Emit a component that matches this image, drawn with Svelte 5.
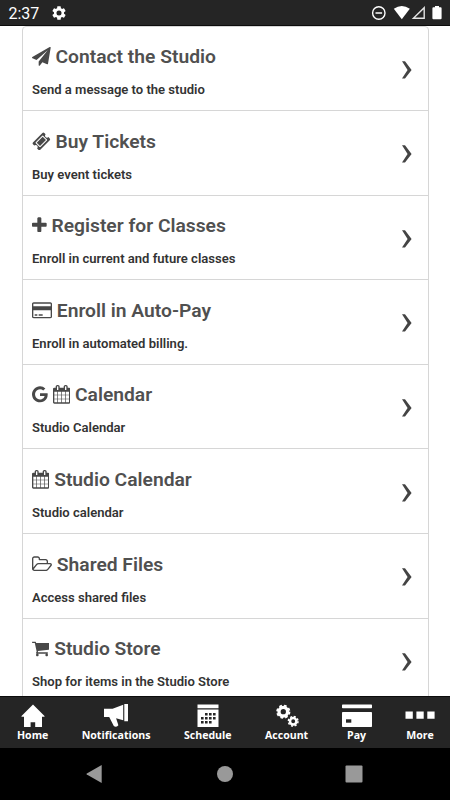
<script>
  // every icon keeps its own advance width, so titles sit right after it
  const icons = {
    plane: {
      box: '0 0 1792 1792',
      path: 'M1764 11q33 24 27 64l-256 1536q-5 29-32 45-14 8-31 8-11 0-24-5l-453-185-242 295q-18 23-49 23-13 0-22-4-19-7-30.5-23.5t-11.5-36.5v-349l864-1059-1069 925-395-162q-37-14-40-55-2-40 32-59l1664-960q15-9 32-9 20 0 36 11z',
    },
    ticket: {
      box: '0 0 1792 1792',
      path: 'M1024 452l316 316-572 572-316-316zm-211 979l618-618q19-19 19-45t-19-45l-362-362q-18-18-45-18t-45 18l-618 618q-19 19-19 45t19 45l362 362q18 18 45 18t45-18zm889-637l-907 908q-37 37-90.5 37t-90.5-37l-126-126q56-56 56-136t-56-136-136-56-136 56l-125-126q-37-37-37-90.5t37-90.5l907-906q37-37 90.5-37t90.5 37l125 125q-56 56-56 136t56 136 136 56 136-56l126 125q37 37 37 90.5t-37 90.5z',
    },
    plus: {
      box: '192 0 1408 1792',
      path: 'M1600 736v192q0 40-28 68t-68 28h-416v416q0 40-28 68t-68 28h-192q-40 0-68-28t-28-68v-416h-416q-40 0-68-28t-28-68v-192q0-40 28-68t68-28h416v-416q0-40 28-68t68-28h192q40 0 68 28t28 68v416h416q40 0 68 28t28 68z',
    },
    card: {
      box: '0 0 1920 1792',
      path: 'M1760 128q66 0 113 47t47 113v1216q0 66-47 113t-113 47h-1600q-66 0-113-47t-47-113v-1216q0-66 47-113t113-47h1600zm-1600 128q-13 0-22.5 9.5t-9.5 22.5v224h1664v-224q0-13-9.5-22.5t-22.5-9.5h-1600zm1600 1280q13 0 22.5-9.5t9.5-22.5v-608h-1664v608q0 13 9.5 22.5t22.5 9.5h1600zm-1504-128v-128h256v128h-256zm384 0v-128h384v128h-384z',
    },
    google: {
      box: '128 0 1536 1792',
      path: 'M896 786h725q12 67 12 128 0 217-91 387.5t-259.5 266.5-386.5 96q-157 0-299-60.5t-245-163.5-163.5-245-60.5-299 60.5-299 163.5-245 245-163.5 299-60.5q300 0 515 201l-209 201q-123-119-306-119-129 0-238.5 65t-173.5 176.5-64 243.5 64 243.5 173.5 176.5 238.5 65q87 0 160-24t120-60 82-82 51.5-87 22.5-78h-436v-264z',
    },
    calendar: {
      box: '64 0 1664 1792',
      path: 'M192 1664h288v-288h-288v288zm352 0h320v-288h-320v288zm-352-352h288v-320h-288v320zm352 0h320v-320h-320v320zm-352-384h288v-288h-288v288zm736 736h320v-288h-320v288zm-384-736h320v-288h-320v288zm768 736h288v-288h-288v288zm-384-352h320v-320h-320v320zm-352-864v-288q0-13-9.5-22.5t-22.5-9.5h-64q-13 0-22.5 9.5t-9.5 22.5v288q0 13 9.5 22.5t22.5 9.5h64q13 0 22.5-9.5t9.5-22.5zm736 864h288v-320h-288v320zm-384-384h320v-288h-320v288zm384 0h288v-288h-288v288zm32-480v-288q0-13-9.5-22.5t-22.5-9.5h-64q-13 0-22.5 9.5t-9.5 22.5v288q0 13 9.5 22.5t22.5 9.5h64q13 0 22.5-9.5t9.5-22.5zm384-64v1280q0 52-38 90t-90 38h-1408q-52 0-90-38t-38-90v-1280q0-52 38-90t90-38h128v-96q0-66 47-113t113-47h64q66 0 113 47t47 113v96h384v-96q0-66 47-113t113-47h64q66 0 113 47t47 113v96h128q52 0 90 38t38 90z',
    },
    folder: {
      box: '64 0 1920 1792',
      path: 'M1845 931q0-35-53-35h-1088q-40 0-85.5 21.5t-71.5 52.5l-294 363q-18 24-18 40 0 35 53 35h1088q40 0 86-22t71-53l294-363q18-22 18-39zm-1141-163h768v-160q0-40-28-68t-68-28h-576q-40 0-68-28t-28-68v-64q0-40-28-68t-68-28h-320q-40 0-68 28t-28 68v853l256-315q44-53 116-87.5t140-34.5zm1269 163q0 62-46 120l-295 363q-43 53-116 87.5t-140 34.5h-1088q-92 0-158-66t-66-158v-960q0-92 66-158t158-66h320q92 0 158 66t66 158v32h544q92 0 158 66t66 158v160h192q54 0 99 24.5t67 70.5q15 32 15 68z',
    },
    cart: {
      box: '64 0 1664 1792',
      path: 'M704 1536q0 52-38 90t-90 38-90-38-38-90 38-90 90-38 90 38 38 90zm896 0q0 52-38 90t-90 38-90-38-38-90 38-90 90-38 90 38 38 90zm128-1088v512q0 24-16.5 42.5t-40.5 21.5l-1044 122q13 60 13 70 0 16-24 64h920q26 0 45 19t19 45-19 45-45 19h-1024q-26 0-45-19t-19-45q0-11 8-31.5t16-36 21.5-40 15.5-29.5l-177-823h-204q-26 0-45-19t-19-45 19-45 45-19h256q16 0 28.5 6.5t19.5 15.5 13 24.5 8 26 5.5 29.5 4.5 26h1201q26 0 45 19t19 45z',
    },
  };

  const items = [
    { icons: ['plane'], title: 'Contact the Studio', text: 'Send a message to the studio' },
    { icons: ['ticket'], title: 'Buy Tickets', text: 'Buy event tickets' },
    { icons: ['plus'], title: 'Register for Classes', text: 'Enroll in current and future classes' },
    { icons: ['card'], title: 'Enroll in Auto-Pay', text: 'Enroll in automated billing.' },
    { icons: ['google', 'calendar'], title: 'Calendar', text: 'Studio Calendar' },
    { icons: ['calendar'], title: 'Studio Calendar', text: 'Studio calendar' },
    { icons: ['folder'], title: 'Shared Files', text: 'Access shared files' },
    { icons: ['cart'], title: 'Studio Store', text: 'Shop for items in the Studio Store' },
  ];

  const tabs = ['Home', 'Notifications', 'Schedule', 'Account', 'Pay', 'More'];
</script>

<div class="screen">
  <header class="status-bar">
    <span class="time">2:37</span>
    <svg class="settings" viewBox="2 2 20 20" width="14" height="14">
      <path fill="#fff" d="M19.14 12.94c.04-.3.06-.61.06-.94 0-.32-.02-.64-.07-.94l2.03-1.58a.49.49 0 0 0 .12-.61l-1.92-3.32a.488.488 0 0 0-.59-.22l-2.39.96c-.5-.38-1.03-.7-1.62-.94l-.36-2.54a.484.484 0 0 0-.48-.41h-3.84c-.24 0-.43.17-.47.41l-.36 2.54c-.59.24-1.13.57-1.62.94l-2.39-.96c-.22-.08-.47 0-.59.22L2.74 8.87c-.12.21-.08.47.12.61l2.03 1.58c-.05.3-.09.63-.09.94s.02.64.07.94l-2.03 1.58a.49.49 0 0 0-.12.61l1.92 3.32c.12.22.37.29.59.22l2.39-.96c.5.38 1.03.7 1.62.94l.36 2.54c.05.24.24.41.48.41h3.84c.24 0 .44-.17.47-.41l.36-2.54c.59-.24 1.13-.56 1.62-.94l2.39.96c.22.08.47 0 .59-.22l1.92-3.32c.12-.22.07-.47-.12-.61zM12 15.6A3.6 3.6 0 1 1 12 8.4a3.6 3.6 0 0 1 0 7.2z" />
    </svg>
    <svg class="indicators" viewBox="0 0 72 16" width="72" height="16">
      <circle cx="8.8" cy="8" r="6.2" fill="none" stroke="#fff" stroke-width="1.4" />
      <path d="M5.5 8h6.6" stroke="#fff" stroke-width="1.5" />
      <path d="M23.8 3.8Q31.8 -1.8 39.8 3.8L31.8 14.2z" fill="#fff" />
      <path d="M54.2 2.7v10.6H43.4z" fill="none" stroke="#e4e4e4" stroke-width="1.4" />
      <path d="M65 1h4v1.3h1.6q1 0 1 1v10q0 1-1 1h-7.2q-1 0-1-1v-10q0-1 1-1H65z" fill="#fff" />
    </svg>
  </header>

  <main>
    <ul class="menu">
      {#each items as item}
        <li>
          <div class="body">
            <h2>
              {#each item.icons as name}
                <svg class="icon" viewBox={icons[name].box}><path d={icons[name].path} /></svg>
              {/each}
              <span>{item.title}</span>
            </h2>
            <p>{item.text}</p>
          </div>
          <svg class="arrow" viewBox="0 0 10 18" width="10" height="18">
            <path d="M0 .3h3L9.6 9 3 17.5H0L5.6 9z" />
          </svg>
        </li>
      {/each}
    </ul>
  </main>

  <nav class="tabs">
    {#each tabs as tab}
      <a href="#{tab.toLowerCase()}">
        {#if tab === 'Home'}
          <svg width="24" height="24" viewBox="0 0 24 24">
            <path d="M12 .5L.5 12v.7H3V23h6.6v-4.7h4.6V23H21V12.7h2.5V12z" />
          </svg>
        {:else if tab === 'Notifications'}
          <svg width="26" height="24" viewBox="0 0 26 24">
            <path d="M1 4.8h8.6L20.2.7v15.6l-7.1-2 2.3 7q-2.4 2.6-4.6.8L6.2 13H1zM21.3 0H25v17.3h-3.7z" />
          </svg>
        {:else if tab === 'Schedule'}
          <svg width="22" height="24" viewBox="0 0 22 24">
            <path d="M.5.4h21v3.8H.5zM.5 5.4h21V23H.5z" />
            <path
              class="cut"
              d="M8 9h2.6v2.6H8zM12 9h2.6v2.6H12zM16 9h2.6v2.6H16zM4 13h2.6v2.6H4zM8 13h2.6v2.6H8zM12 13h2.6v2.6H12zM16 13h2.6v2.6H16zM4 17h2.6v2.6H4zM8 17h2.6v2.6H8zM12 17h2.6v2.6H12z"
            />
          </svg>
        {:else if tab === 'Account'}
          <svg class="gears" width="24" height="24" viewBox="0 0 24 24">
            <circle cx="8.3" cy="7.7" r="4.3" stroke-width="3.3" />
            <circle cx="8.3" cy="7.7" r="6.2" stroke-width="1.8" stroke-dasharray="2.7 2.17" />
            <circle cx="18.2" cy="17.3" r="3.2" stroke-width="2.5" />
            <circle cx="18.2" cy="17.3" r="4.8" stroke-width="1.5" stroke-dasharray="2.05 1.72" />
          </svg>
        {:else if tab === 'Pay'}
          <svg width="30" height="24" viewBox="0 0 30 24">
            <rect y=".5" width="30" height="3.8" rx=".7" />
            <rect y="8" width="30" height="15" rx=".7" />
            <path class="cut" d="M4 15.3h5.3v3.4H4z" />
          </svg>
        {:else}
          <svg width="30" height="24" viewBox="0 0 30 24">
            <path d="M.5 7.4h7.3v7.4H.5zM11.4 7.4h7.3v7.4h-7.3zM22.3 7.4h7.3v7.4h-7.3z" />
          </svg>
        {/if}
        <span>{tab}</span>
      </a>
    {/each}
  </nav>

  <footer class="system-nav">
    <svg width="18" height="20" viewBox="0 0 18 20"><path d="M15.7 1v18L.8 10.6q-.8-.6 0-1.2z" /></svg>
    <svg width="18" height="20" viewBox="0 0 18 20"><circle cx="9" cy="10" r="8" /></svg>
    <svg width="18" height="20" viewBox="0 0 18 20"><rect x=".5" y="1.5" width="17" height="17" rx="1" /></svg>
  </footer>
</div>

<style>
  :global(body) {
    margin: 0;
    background: #fff;
  }

  .screen {
    display: flex;
    flex-direction: column;
    height: 800px;
    width: 450px;
    overflow: hidden;
    font-family: Roboto, sans-serif;
  }

  .status-bar {
    box-sizing: border-box;
    flex: none;
    display: flex;
    align-items: center;
    height: 26px;
    padding: 1px 8px 0 8.5px;
    background: #252525;
    border-bottom: 1px solid #0c0c0c;
    color: #fff;
  }

  .time {
    width: 43px;
    padding-top: 2px;
    font-size: 16px;
    line-height: 22px;
  }

  .indicators {
    margin-left: auto;
  }

  main {
    flex: 1;
    min-height: 0;
    overflow: hidden;
    padding: 0 21px 0 22px;
  }

  .menu {
    list-style: none;
    margin: 0;
    padding: 0;
    border: 1px solid #d6d6d6;
    border-radius: 4px;
  }

  li {
    box-sizing: border-box;
    display: flex;
    align-items: center;
    justify-content: space-between;
    height: 84.6px;
    padding: 7.5px 16px 0 9px;
    border-bottom: 1px solid #d6d6d6;
  }

  li:first-child {
    height: 84px;
  }

  h2 {
    display: flex;
    gap: 4.8px;
    margin: 0;
    font-size: 19.25px;
    line-height: 24px;
    font-weight: 600;
    color: #505050;
    white-space: nowrap;
  }

  .icon {
    height: 18.7px;
    margin-top: 2px;
    fill: #484848;
  }

  p {
    margin: 12px 0 0;
    font-size: 13.05px;
    line-height: 18px;
    font-weight: 600;
    color: #333;
  }

  .arrow {
    margin-bottom: 4.5px;
    fill: #444;
  }

  .tabs {
    box-sizing: border-box;
    flex: none;
    display: flex;
    justify-content: space-between;
    height: 52px;
    padding: 7px 15px 0 17px;
    background: #252525;
    border-top: 1px solid #0c0c0c;
  }

  .tabs a {
    display: flex;
    flex-direction: column;
    align-items: center;
    color: #fff;
    font-family: 'Open Sans', sans-serif;
    font-size: 10.6px;
    font-weight: 700;
    line-height: 15px;
    text-decoration: none;
  }

  .tabs svg {
    fill: #fff;
  }

  .tabs .cut {
    fill: #252525;
  }

  .gears circle {
    fill: none;
    stroke: #fff;
  }

  .system-nav {
    flex: none;
    display: flex;
    align-items: center;
    justify-content: space-between;
    height: 52px;
    padding: 0 87px 0 86px;
    background: #000;
  }

  .system-nav svg {
    fill: #999;
  }
</style>
